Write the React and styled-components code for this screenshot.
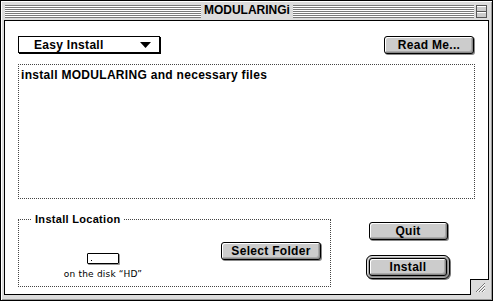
import React from 'react';
import styled, { createGlobalStyle } from 'styled-components';

const Global = createGlobalStyle`
  html, body { margin: 0; padding: 0; background: #ddd; }
  body { font-family: "Liberation Sans", Arial, sans-serif; }
  * { box-sizing: border-box; }
`;

const Window = styled.div`
  width: 493px;
  height: 301px;
  border: 1px solid #000;
  background: #dcdcdc;
  box-shadow: inset 1px 1px 0 #fff, inset -1px -1px 0 #999;
  display: flex;
  flex-direction: column;
`;

const TitleBar = styled.div`
  height: 19px;
  display: flex;
  align-items: center;
  padding: 0 5px 0 4px;
`;

const Stripes = styled.div`
  flex: ${p => p.$grow};
  height: 13px;
  margin-top: 1px;
  background: repeating-linear-gradient(to bottom, #7a7a7a 0 1px, #fff 1px 2px);
`;

const Title = styled.div`
  font-weight: bold;
  font-size: 12px;
  padding: 0 3px;
  line-height: 19px;
`;

const ZoomBox = styled.div`
  width: 11px;
  height: 13px;
  margin-left: 2px;
  margin-top: 1px;
  display: flex;
`;

const Frame = styled.div`
  flex: 1;
  padding: 0 3px 5px 3px;
  display: flex;
`;

const Content = styled.div`
  flex: 1;
  position: relative;
  background: #fff;
  border: 1px solid #000;
  padding: 0 13px 0 12px;
  display: flex;
  flex-direction: column;
  letter-spacing: 0.3px;
`;

const TopRow = styled.div`
  display: flex;
  justify-content: space-between;
  align-items: flex-start;
  margin-top: 15px;
  padding-right: 1px;
`;

const Popup = styled.div`
  width: 142px;
  height: 17px;
  border: 1px solid #000;
  box-shadow: 1px 1px 0 #000;
  display: flex;
  align-items: center;
  justify-content: space-between;
  padding: 0 8px 0 15px;
  font-weight: bold;
  font-size: 12px;
  margin-left: 1px;
`;

const Button = styled.div`
  width: ${p => p.$w}px;
  height: 18px;
  border: 1px solid #000;
  border-radius: 3px;
  background: #cccccc;
  box-shadow: inset 1px 1px 0 #fff, inset -1px -1px 0 #888, inset -2px -2px 0 #aaa, 1px 1px 0 #888;
  display: flex;
  align-items: center;
  justify-content: center;
  font-weight: bold;
  font-size: 12px;
  padding-bottom: 1px;
`;

const DefaultRing = styled.div`
  border: 1px solid #000;
  border-radius: 6px;
  padding: 2px;
  background: #a8a8a8;
  box-shadow: inset 1px 1px 0 #ddd, 1px 1px 0 #777;
`;

const TextArea = styled.div`
  margin-top: 10px;
  margin-left: 1px;
  height: 135px;
  border: 1px dotted #444;
  padding: 3px 2px;
  font-weight: bold;
  font-size: 12px;
  line-height: 14px;
`;

const BottomRow = styled.div`
  display: flex;
  align-items: flex-start;
  margin-top: 14px;
`;

const Group = styled.fieldset`
  margin: 0 0 0 1px;
  width: 313px;
  height: 74px;
  border: 1px dotted #444;
  padding: 0 9px 0 0;
  display: flex;
  align-items: flex-start;
`;

const Legend = styled.legend`
  font-weight: bold;
  font-size: 11px;
  line-height: 13px;
  padding: 0 4px;
  margin-left: 12px;
`;

const Location = styled.div`
  width: 120px;
  margin-left: 24px;
  margin-top: 27px;
  display: flex;
  flex-direction: column;
  align-items: center;
  gap: 5px;
`;

const PathField = styled.div`
  width: 32px;
  height: 11px;
  border: 1px solid #000;
  border-radius: 1px;
  box-shadow: 1px 1px 0 #999;
  position: relative;
  &::after {
    content: '';
    position: absolute;
    left: 3px;
    bottom: 2px;
    width: 1px;
    height: 1px;
    background: #000;
  }
`;

const Caption = styled.div`
  font-size: 9px;
  line-height: 10px;
  letter-spacing: 0.2px;
  font-family: "DejaVu Sans", "Liberation Sans", sans-serif;
`;

const SelectWrap = styled.div`
  margin-left: auto;
  margin-top: 16px;
`;

const ActionColumn = styled.div`
  margin-left: auto;
  margin-right: 25px;
  margin-top: 9px;
  display: flex;
  flex-direction: column;
  align-items: center;
  gap: 15px;
`;

const GrowBox = styled.div`
  position: absolute;
  right: -1px;
  bottom: -1px;
  width: 19px;
  height: 16px;
  background: #dcdcdc;
  border-left: 1px solid #000;
  border-top: 1px solid #000;
  display: flex;
  align-items: center;
  justify-content: center;
`;

export default function App() {
  return (
    <>
      <Global />
      <Window>
        <TitleBar>
          <Stripes $grow={198} />
          <Title>MODULARINGi</Title>
          <Stripes $grow={183} />
          <ZoomBox>
            <svg width="11" height="13" viewBox="0 0 11 13">
              <rect x="0.5" y="0.5" width="10" height="12" fill="#ccc" stroke="#555" />
              <line x1="1" y1="1.5" x2="10" y2="1.5" stroke="#fff" />
              <line x1="1" y1="6.5" x2="10" y2="6.5" stroke="#555" />
              <line x1="1" y1="7.5" x2="10" y2="7.5" stroke="#fff" />
            </svg>
          </ZoomBox>
        </TitleBar>
        <Frame>
          <Content>
            <TopRow>
              <Popup>
                <span>Easy Install</span>
                <svg width="11" height="6" viewBox="0 0 11 6">
                  <polygon points="0,0 11,0 5.5,6" fill="#000" />
                </svg>
              </Popup>
              <Button $w={90}>Read Me...</Button>
            </TopRow>
            <TextArea>install MODULARING and necessary files</TextArea>
            <BottomRow>
              <Group>
                <Legend>Install Location</Legend>
                <Location>
                  <PathField />
                  <Caption>on the disk “HD”</Caption>
                </Location>
                <SelectWrap>
                  <Button $w={100}>Select Folder</Button>
                </SelectWrap>
              </Group>
              <ActionColumn>
                <Button $w={79}>Quit</Button>
                <DefaultRing>
                  <Button $w={78}>Install</Button>
                </DefaultRing>
              </ActionColumn>
            </BottomRow>
            <GrowBox>
              <svg width="11" height="11" viewBox="0 0 11 11">
                <line x1="1" y1="10" x2="10" y2="1" stroke="#777" />
                <line x1="2" y1="10" x2="10" y2="2" stroke="#fff" />
                <line x1="4" y1="10" x2="10" y2="4" stroke="#777" />
                <line x1="5" y1="10" x2="10" y2="5" stroke="#fff" />
                <line x1="7" y1="10" x2="10" y2="7" stroke="#777" />
                <line x1="8" y1="10" x2="10" y2="8" stroke="#fff" />
              </svg>
            </GrowBox>
          </Content>
        </Frame>
      </Window>
    </>
  );
}
